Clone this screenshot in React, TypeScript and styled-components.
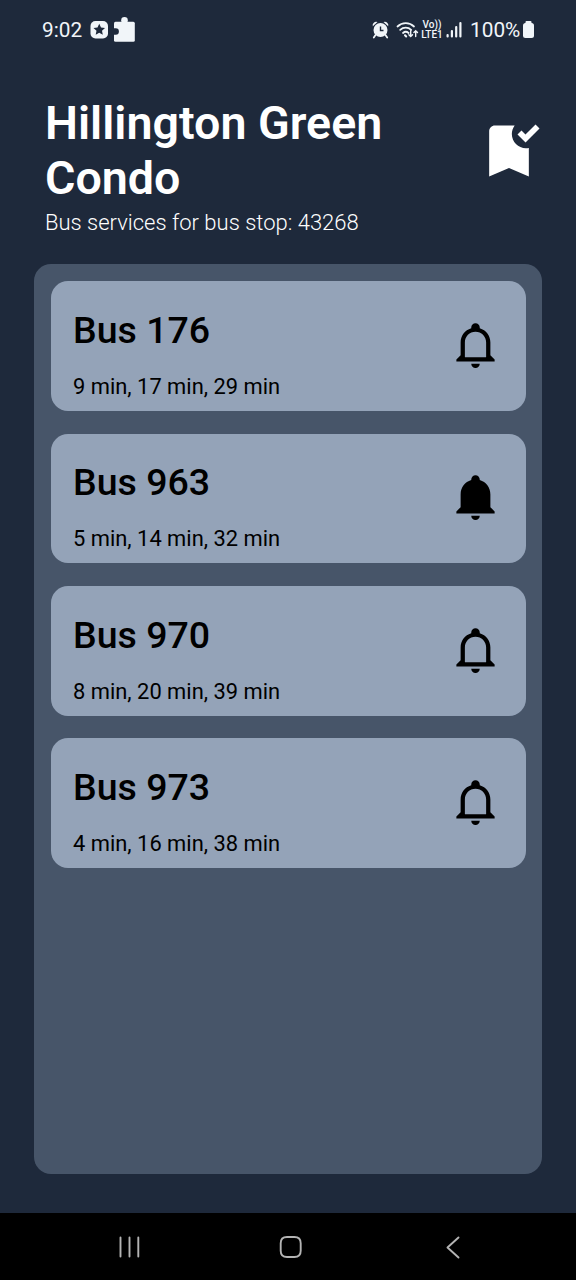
import React from "react";
import styled, { createGlobalStyle } from "styled-components";

const GlobalStyle = createGlobalStyle`
  * { box-sizing: border-box; }
  body {
    margin: 0;
    background: #1e293b;
    font-family: Roboto, sans-serif;
    -webkit-font-smoothing: antialiased;
  }
  svg { display: block; flex: none; }
`;

const Screen = styled.div`
  width: 576px;
  height: 1280px;
  display: flex;
  flex-direction: column;
  background: #1e293b;
  overflow: hidden;
`;

const StatusBar = styled.div`
  height: 58px;
  padding: 2px 41px 0 42px;
  display: flex;
  align-items: center;
  justify-content: space-between;
  color: #f1f5f9;
`;

const StatusGroup = styled.div`
  display: flex;
  align-items: center;
`;

const StatusText = styled.span<{ $width: number }>`
  width: ${(p) => p.$width}px;
  font-size: 20.8px;
  line-height: 24px;
  white-space: nowrap;
`;

const AlarmSlot = styled.div`
  margin-right: 7px;
`;

const SignalSlot = styled.div`
  margin: 0 7px 0 3px;
`;

const Network = styled.div`
  width: 22px;
  margin-left: 2px;
  display: flex;
  flex-direction: column;
  align-items: center;
  font-size: 10px;
  font-weight: 500;
  line-height: 10px;
  white-space: nowrap;
`;

const Header = styled.header`
  height: 206px;
  padding: 38px 33.5px 0 45px;
  display: flex;
  justify-content: space-between;
`;

const Title = styled.h1`
  margin: 0;
  width: 370px;
  color: #fff;
  font-size: 46.6px;
  font-weight: 600;
  line-height: 54.5px;
`;

const Subtitle = styled.p`
  margin: 5px 0 0;
  color: #fff;
  font-size: 22px;
  font-weight: 300;
  line-height: 26px;
`;

const BookmarkSlot = styled.div`
  padding-top: 21px;
`;

const Panel = styled.main`
  height: 910px;
  margin: 0 34px;
  padding: 17.3px 16px 17px 17px;
  display: flex;
  flex-direction: column;
  gap: 22.4px;
  border-radius: 17px;
  background: #475569;
`;

const Card = styled.section`
  height: 129.9px;
  padding: 25.7px 25px 0 22px;
  display: flex;
  flex: none;
  justify-content: space-between;
  border-radius: 17px;
  background: #94a3b8;
  color: #000;
`;

const BusName = styled.h2`
  margin: 0;
  font-size: 37.5px;
  font-weight: 500;
  line-height: 46px;
`;

const Arrivals = styled.p`
  margin: 21px 0 0;
  font-size: 21.9px;
  line-height: 26px;
`;

const BellSlot = styled.div`
  padding-top: 12px;
`;

const NavBar = styled.nav`
  height: 67px;
  margin-top: auto;
  padding: 0 115px 0 118px;
  display: flex;
  align-items: center;
  justify-content: space-between;
  background: #000;
`;

const BELL =
  "M21,19V20H3V19L5,17V11C5,7.9 7.03,5.17 10,4.29C10,4.19 10,4.1 10,4A2,2 0 0,1 12,2A2,2 0 0,1 14,4C14,4.1 14,4.19 14,4.29C16.97,5.17 19,7.9 19,11V17L21,19M14,21A2,2 0 0,1 12,23A2,2 0 0,1 10,21";
const BELL_OUTLINE =
  "M10 21H14C14 22.1 13.1 23 12 23S10 22.1 10 21M21 19V20H3V19L5 17V11C5 7.9 7 5.2 10 4.3V4C10 2.9 10.9 2 12 2S14 2.9 14 4V4.3C17 5.2 19 7.9 19 11V17L21 19M17 11C17 8.2 14.8 6 12 6S7 8.2 7 11V18H17V11Z";

const BellIcon = ({ active }: { active: boolean }) => (
  <svg width="51" height="51" viewBox="0 0 24 24">
    <path d={active ? BELL : BELL_OUTLINE} />
  </svg>
);

const BookmarkIcon = () => (
  <svg width="68" height="68" viewBox="0 0 24 24" fill="#fff">
    <path d="M19,21l-7-3l-7,3V5c0-1.1,0.9-2,2-2l7,0c-0.63,0.84-1,1.87-1,3c0,2.76,2.24,5,5,5c0.34,0,0.68-0.03,1-0.1V21z M17.83,9L15,6.17l1.41-1.41l1.41,1.41l3.54-3.54l1.41,1.41L17.83,9z" />
  </svg>
);

const AppBadgeIcons = () => (
  <svg width="46" height="28" viewBox="0 0 46 28" fill="#f1f5f9">
    <rect x="0.5" y="5" width="17.5" height="17.5" rx="5" />
    <path
      fill="#1e293b"
      d="M9.25 7.8l1.75 3.7 4 .5-3 2.8.8 4-3.55-2-3.55 2 .8-4-3-2.8 4-.5z"
    />
    <rect x="24" y="5.700" width="20.8" height="20" rx="1.5" />
    <circle cx="34.5" cy="4.200" r="3.300" />
    <path fill="#1e293b" d="M23 12.300h2.700a3.200 3.200 0 0 1 0 6.400h-2.700z" />
  </svg>
);

const AlarmIcon = () => (
  <svg width="17" height="18" viewBox="0 0 17 18">
    <path d="M0.800 5.200a3.500 3.500 0 0 1 4.700-4.200zM16.200 5.200a3.500 3.500 0 0 0-4.700-4.200z" fill="#f1f5f9" />
    <path d="M3.500 14l-1.700 2.500M13.500 14l1.700 2.500" stroke="#f1f5f9" strokeWidth="1.800" strokeLinecap="round" />
    <circle cx="8.500" cy="9" r="7" fill="#f1f5f9" />
    <path d="M8.500 5.500v4h3" fill="none" stroke="#1e293b" strokeWidth="1.400" />
  </svg>
);

const WifiIcon = () => (
  <svg width="23" height="18" viewBox="0 0 23 18" fill="none" stroke="#f1f5f9" strokeLinecap="round">
    <path d="M1.500 5.500a12 12 0 0 1 16.500 0M4.200 8.900a8 8 0 0 1 11 0M7 12a4.300 4.300 0 0 1 5.600 0" strokeWidth="1.800" />
    <path d="M9 14.200l1.200 1.300" strokeWidth="2" />
    <path d="M14.700 9.800v5.700M12.900 13.700l1.800 1.900 1.800-1.900M19.700 15.500v-5.700M17.900 11.600l1.800-1.900 1.800 1.900" strokeWidth="1.400" />
  </svg>
);

const SignalIcon = () => (
  <svg width="17" height="18" viewBox="0 0 17 18" fill="#f1f5f9">
    <rect x="0.500" y="13" width="2.200" height="3.500" rx="1" />
    <rect x="4.800" y="9" width="2.200" height="7.500" rx="1" />
    <rect x="9.100" y="5" width="2.200" height="11.500" rx="1" />
    <rect x="13.300" y="1" width="2.200" height="15.500" rx="1" />
  </svg>
);

const BatteryIcon = () => (
  <svg width="12" height="18" viewBox="0 0 12 18" fill="#f1f5f9">
    <rect x="2.500" y="0" width="6" height="5" rx="1" />
    <rect x="0" y="2" width="11" height="15" rx="2.500" />
  </svg>
);

const NavIcon = ({ width, d }: { width: number; d: string }) => (
  <svg width={width} height="24" viewBox={`0 0 ${width} 24`} fill="none" stroke="#b4b4b4" strokeWidth="1.900" strokeLinecap="round" strokeLinejoin="round">
    <path d={d} />
  </svg>
);

const services = [
  { bus: "176", times: [9, 17, 29], alert: false },
  { bus: "963", times: [5, 14, 32], alert: true },
  { bus: "970", times: [8, 20, 39], alert: false },
  { bus: "973", times: [4, 16, 38], alert: false },
];

export default function App() {
  return (
    <Screen>
      <GlobalStyle />
      <StatusBar>
        <StatusGroup>
          <StatusText $width={47.5}>9:02</StatusText>
          <AppBadgeIcons />
        </StatusGroup>
        <StatusGroup>
          <AlarmSlot>
            <AlarmIcon />
          </AlarmSlot>
          <WifiIcon />
          <Network>
            <span>Vo))</span>
            <span>LTE1</span>
          </Network>
          <SignalSlot>
            <SignalIcon />
          </SignalSlot>
          <StatusText $width={53}>100%</StatusText>
          <BatteryIcon />
        </StatusGroup>
      </StatusBar>
      <Header>
        <div>
          <Title>Hillington Green Condo</Title>
          <Subtitle>Bus services for bus stop: 43268</Subtitle>
        </div>
        <BookmarkSlot>
          <BookmarkIcon />
        </BookmarkSlot>
      </Header>
      <Panel>
        {services.map((s) => (
          <Card key={s.bus}>
            <div>
              <BusName>Bus {s.bus}</BusName>
              <Arrivals>{s.times.map((t) => `${t} min`).join(", ")}</Arrivals>
            </div>
            <BellSlot>
              <BellIcon active={s.alert} />
            </BellSlot>
          </Card>
        ))}
      </Panel>
      <NavBar>
        <NavIcon width={23} d="M2.500 2.500v19M11.500 2.500v19M20.300 2.500v19" />
        <NavIcon width={28} d="M8 2h7.400q6.300 0 6.300 6.300v7.400q0 6.300-6.300 6.300h-7.400q-6.300 0-6.300-6.300v-7.400q0-6.300 6.300-6.300z" />
        <NavIcon width={16} d="M13.500 2.500l-11 10 11 10" />
      </NavBar>
    </Screen>
  );
}
